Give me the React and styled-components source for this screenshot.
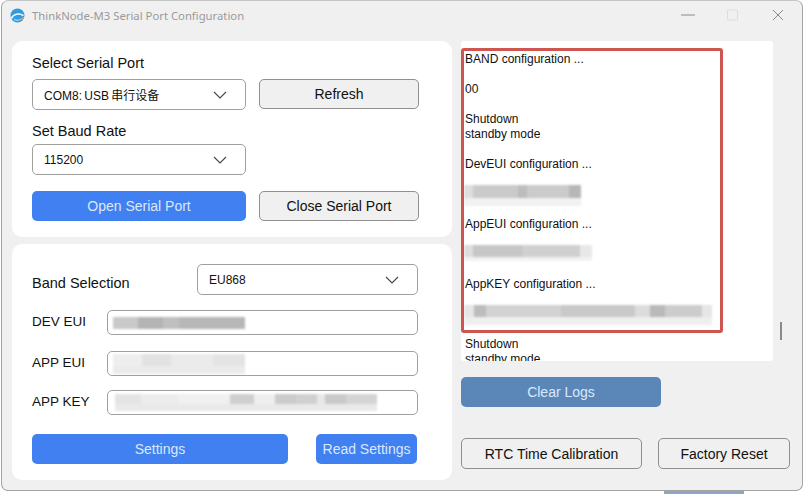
import React from 'react'
import styled, { createGlobalStyle } from 'styled-components'

const GlobalStyle = createGlobalStyle`
  html, body {
    margin: 0;
    padding: 0;
    background: #fff;
  }
  * {
    box-sizing: border-box;
  }
`

const Page = styled.div`
  width: 804px;
  height: 494px;
  overflow: hidden;
  background: #fff;
  font-family: "Liberation Sans", Arial, "Noto Sans CJK SC", sans-serif;
  color: #111;
`

const Win = styled.div`
  width: 802px;
  height: 491px;
  margin-left: 1px;
  background: #f0f0f0;
  border: 1px solid #a3a3a3;
  border-top-color: #c4c4c4;
  border-radius: 7px;
  display: flex;
  flex-direction: column;
`

const BehindWindow = styled.div`
  width: 80px;
  height: 3px;
  margin-left: 664px;
  background: #8ea6c6;
`

const TitleBar = styled.div`
  height: 40px;
  display: flex;
  align-items: center;
  padding: 0 18px 12px 8px;
  flex-shrink: 0;
`

const TitleText = styled.span`
  margin-left: 7px;
  font-family: "Noto Sans", sans-serif;
  font-size: 11.3px;
  color: #9a9a9a;
  flex: 1;
`

const WinControls = styled.div`
  display: flex;
  align-items: center;
  gap: 31px;
`

const Body = styled.div`
  display: grid;
  grid-template-columns: 440px 329px;
  column-gap: 9px;
  padding-left: 10px;
`

const LeftCol = styled.div`
  display: flex;
  flex-direction: column;
  gap: 7px;
`

const Panel = styled.section`
  background: #fff;
  border-radius: 10px;
  padding: ${p => p.$padding};
  height: ${p => p.$height}px;
`

const PortGrid = styled.div`
  display: grid;
  grid-template-columns: 214px 160px;
  column-gap: 13px;
  align-items: start;
`

const Label = styled.label`
  display: block;
  font-size: 14.5px;
  line-height: 16px;
  margin: ${p => p.$margin || '0'};
`

const SelectBox = styled.div`
  display: flex;
  align-items: center;
  justify-content: space-between;
  width: ${p => (p.$width ? `${p.$width}px` : 'auto')};
  height: 31px;
  padding: 0 18px 0 11px;
  background: #fff;
  border: 1px solid #a0a0a0;
  border-radius: 5px;
  font-size: 12px;
  word-spacing: -1px;
`

const Button = styled.button`
  display: block;
  width: ${p => p.$width}px;
  height: ${p => p.$height || 30}px;
  margin: ${p => p.$margin || '0'};
  padding: 0;
  font-family: inherit;
  font-size: 14px;
  border-radius: 5px;
  border: 1px solid ${p => (p.$variant === 'plain' ? '#8f8f8f' : 'transparent')};
  color: ${p => (p.$variant === 'plain' ? '#111' : '#dbe8fb')};
  background: ${p =>
    p.$variant === 'plain' ? '#f0f0f0' : p.$variant === 'muted' ? '#5a87b8' : '#4080f0'};
`

const BandRow = styled.div`
  display: flex;
  justify-content: space-between;
  align-items: flex-end;
  width: 386px;
`

const FieldRow = styled.div`
  display: grid;
  grid-template-columns: 75px 311px;
  align-items: center;
  margin-top: ${p => p.$top}px;
`

const FieldLabel = styled.span`
  font-size: 13.5px;
  padding-bottom: 2px;
`

const Input = styled.div`
  height: 25px;
  background: #fff;
  border: 1px solid #a0a0a0;
  border-radius: 5px;
  display: flex;
  align-items: center;
  padding-left: ${p => p.$inset}px;
  overflow: hidden;
`

const Redacted = styled.div`
  width: ${p => p.$width}px;
  height: ${p => p.$height}px;
  display: flex;
  flex-wrap: wrap;
  align-content: flex-start;
  filter: blur(0.8px);
`

const Cell = styled.i`
  display: block;
  width: ${p => p.$w}%;
  height: ${p => p.$h}%;
  background: ${p => p.$c};
`

const SettingsRow = styled.div`
  display: flex;
  justify-content: space-between;
  width: 385px;
  margin-top: 19px;
`

const RightCol = styled.div`
  display: flex;
  flex-direction: column;
`

const LogRow = styled.div`
  display: flex;
  align-items: flex-start;
`

const LogPanel = styled.div`
  position: relative;
  width: 312px;
  height: 320px;
  padding: 11px 0 0 4px;
  background: #fff;
  border-radius: 3px;
  overflow: hidden;
  font-size: 12px;
  line-height: 15px;
`

const Line = styled.div`
  height: 15px;
`

const RedactedLine = styled.div`
  height: 15px;
  margin: -2px 0 2px -1px;
`

const Annotation = styled.div`
  position: absolute;
  left: 0;
  top: 7px;
  width: 262px;
  height: 285px;
  border: 3px solid #cf5650;
  border-radius: 3px;
`

const ScrollThumb = styled.div`
  width: 2px;
  height: 18px;
  margin: 281px 0 0 7px;
  background: #8a8a8a;
`

const ActionRow = styled.div`
  display: flex;
  justify-content: space-between;
  margin-top: 31px;
`

const Chevron = () => (
  <svg width="14" height="8" viewBox="0 0 14 8" fill="none" stroke="#444" strokeWidth="1.1">
    <path d="M1 1l6 6 6-6" />
  </svg>
)

const Logo = () => (
  <svg width="15" height="15" viewBox="0 0 15 15" fill="none">
    <circle cx="7.5" cy="7.5" r="7" fill="#2f9be2" />
    <path d="M1.5 10.5C3 6 9 4.6 13.5 7.6" stroke="#f4f8fb" strokeWidth="1.7" />
    <path d="M4 11.4c2 1.2 3.6 1 5 .6" stroke="#8ed0f4" strokeWidth="1.4" />
    <path d="M9 12c1.8-.3 3.4-1 4.4-2.6" stroke="#e8a45c" strokeWidth="1.5" />
  </svg>
)

const devBlocks = [
  [19, '#c9c9c9'], [19, '#b4b4b4'], [12, '#bfbfbf'], [50, '#b7b7b7'],
]
const appBlocks = [
  [22, '#eeeeee'], [22, '#e2e2e2'], [32, '#ebebeb'], [24, '#e4e4e4'],
]
const keyBlocks = [
  [10, '#e4e4e4'], [14, '#ececec'], [20, '#f0f0f0'], [9, '#cfcfcf'], [8, '#eeeeee'],
  [8, '#cbcbcb'], [8, '#d0d0d0'], [3, '#e8e8e8'], [8, '#c9c9c9'], [12, '#d4d4d4'],
]
const logDev = [
  [8, '#dedede'], [38, '#cacaca'], [8, '#bdbdbd'], [36, '#cbcbcb'], [10, '#b7b7b7'],
]
const logApp = [
  [7, '#dddddd'], [38, '#c6c6c6'], [46, '#d0d0d0'], [9, '#e8e8e8'],
]
const logKey = [
  [4, '#e6e6e6'], [5, '#bcbcbc'], [30, '#d2d2d2'], [30, '#c9c9c9'], [6, '#dcdcdc'],
  [6, '#b9b9b9'], [15, '#cccccc'], [4, '#e6e6e6'],
]

const Mosaic = ({ width, height, blocks, light, split = 60 }) => (
  <Redacted $width={width} $height={height}>
    {blocks.map(([w, c], i) => (
      <Cell key={i} $w={w} $h={split} $c={c} />
    ))}
    <Cell $w={100} $h={100 - split} $c={light} />
  </Redacted>
)

export default function App() {
  return (
    <Page>
      <GlobalStyle />
      <Win>
        <TitleBar>
          <Logo />
          <TitleText>ThinkNode-M3 Serial Port Configuration</TitleText>
          <WinControls>
            <svg width="14" height="12" viewBox="0 0 14 12" stroke="#8a8a8a">
              <path d="M0 6h14" />
            </svg>
            <svg width="15" height="12" viewBox="0 0 15 12" fill="none" stroke="#dddddd">
              <rect x="1.5" y="1" width="10" height="10" rx="1" />
            </svg>
            <svg width="12" height="12" viewBox="0 0 12 12" stroke="#8a8a8a">
              <path d="M1 1l10 10M11 1L1 11" />
            </svg>
          </WinControls>
        </TitleBar>
        <Body>
          <LeftCol>
            <Panel $height={196} $padding="14px 20px 0">
              <Label $margin="0 0 8px">Select Serial Port</Label>
              <PortGrid>
                <SelectBox>
                  <span>COM8: USB 串行设备</span>
                  <Chevron />
                </SelectBox>
                <Button $variant="plain">Refresh</Button>
              </PortGrid>
              <Label $margin="13px 0 5px">Set Baud Rate</Label>
              <SelectBox $width={214}>
                <span>115200</span>
                <Chevron />
              </SelectBox>
              <PortGrid>
                <Button $width={214} $margin="16px 0 0">Open Serial Port</Button>
                <Button $variant="plain" $margin="16px 0 0">Close Serial Port</Button>
              </PortGrid>
            </Panel>
            <Panel $height={236} $padding="20px 20px 0">
              <BandRow>
                <Label $margin="0 0 4px">Band Selection</Label>
                <SelectBox $width={221}>
                  <span>EU868</span>
                  <Chevron />
                </SelectBox>
              </BandRow>
              <FieldRow $top={15}>
                <FieldLabel>DEV EUI</FieldLabel>
                <Input $inset={5}>
                  <Mosaic width={132} height={12} blocks={devBlocks} light="#b7b7b7" split={100} />
                </Input>
              </FieldRow>
              <FieldRow $top={16}>
                <FieldLabel>APP EUI</FieldLabel>
                <Input $inset={5}>
                  <Mosaic width={132} height={20} blocks={appBlocks} light="#ebebeb" />
                </Input>
              </FieldRow>
              <FieldRow $top={14}>
                <FieldLabel>APP KEY</FieldLabel>
                <Input $inset={7}>
                  <Mosaic width={262} height={17} blocks={keyBlocks} light="#e9e9e9" />
                </Input>
              </FieldRow>
              <SettingsRow>
                <Button $width={256}>Settings</Button>
                <Button $width={101}>Read Settings</Button>
              </SettingsRow>
            </Panel>
          </LeftCol>
          <RightCol>
            <LogRow>
              <LogPanel>
                <Line>BAND configuration ...</Line>
                <Line />
                <Line>00</Line>
                <Line />
                <Line>Shutdown</Line>
                <Line>standby mode</Line>
                <Line />
                <Line>DevEUI configuration ...</Line>
                <Line />
                <RedactedLine>
                  <Mosaic width={117} height={21} blocks={logDev} light="#f1f1f1" />
                </RedactedLine>
                <Line />
                <Line>AppEUI configuration ...</Line>
                <Line />
                <RedactedLine>
                  <Mosaic width={128} height={16} blocks={logApp} light="#f2f2f2" split={75} />
                </RedactedLine>
                <Line />
                <Line>AppKEY configuration ...</Line>
                <Line />
                <RedactedLine>
                  <Mosaic width={248} height={20} blocks={logKey} light="#efefef" />
                </RedactedLine>
                <Line />
                <Line>Shutdown</Line>
                <Line>standby mode</Line>
                <Annotation />
              </LogPanel>
              <ScrollThumb />
            </LogRow>
            <Button $variant="muted" $width={200} $margin="16px 0 0">Clear Logs</Button>
            <ActionRow>
              <Button $variant="plain" $width={181} $height={31}>RTC Time Calibration</Button>
              <Button $variant="plain" $width={132} $height={31}>Factory Reset</Button>
            </ActionRow>
          </RightCol>
        </Body>
      </Win>
      <BehindWindow />
    </Page>
  )
}
